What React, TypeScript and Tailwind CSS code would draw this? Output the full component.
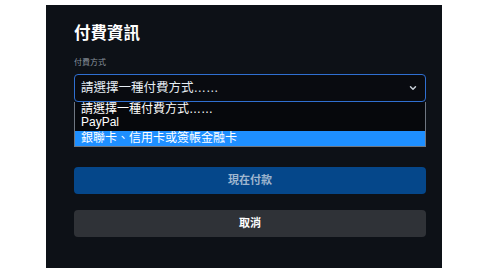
import { ChevronDown } from "lucide-react";

const font = { fontFamily: '"Liberation Sans", "Noto Sans CJK TC", sans-serif' };

export default function App() {
  return (
    <div className="h-[275px] w-[480px] bg-white" style={font}>
      <div className="ml-[46px] h-[263px] w-[396px] translate-y-[5px] bg-[#0d1117] pl-[28px] pr-[16px] pt-[16px]">
        <h1 className="text-[16.5px] font-bold leading-[24px] text-white">付費資訊</h1>
        <p className="mt-[13px] text-[8px] leading-[10px] text-[#8b949e]">付費方式</p>

        <div className="relative mt-[6px]">
          <div className="flex h-[28px] items-center justify-between rounded-[4px] border border-[#2f6fd1] bg-[#090b10] pl-[6px] pr-[7px]">
            <span className="text-[12.5px] text-[#e6edf3]">請選擇一種付費方式……</span>
            <ChevronDown className="h-[10px] w-[10px] text-[#c9d1d9]" strokeWidth={3.5} />
          </div>

          <ul className="absolute left-0 right-0 top-[28px] border-x border-b border-[#6e7681] bg-[#06080c] text-[12px] leading-[13px] text-white">
            <li className="pl-[6px] pt-[1px]">請選擇一種付費方式……</li>
            <li className="pl-[6px]">PayPal</li>
            <li className="mt-[2px] bg-[#1e8fff] pl-[6px] pb-[1px] pt-[1px]">銀聯卡、信用卡或簽帳金融卡</li>
          </ul>
        </div>

        <button className="mt-[65px] flex h-[27px] w-full items-center justify-center rounded-[4px] bg-[#05478a] text-[11px] font-bold text-[#9fb6cf]">
          現在付款
        </button>
        <button className="mt-[16px] flex h-[27px] w-full items-center justify-center rounded-[4px] bg-[#2f3237] text-[11px] font-bold text-white">
          取消
        </button>
      </div>
    </div>
  );
}
